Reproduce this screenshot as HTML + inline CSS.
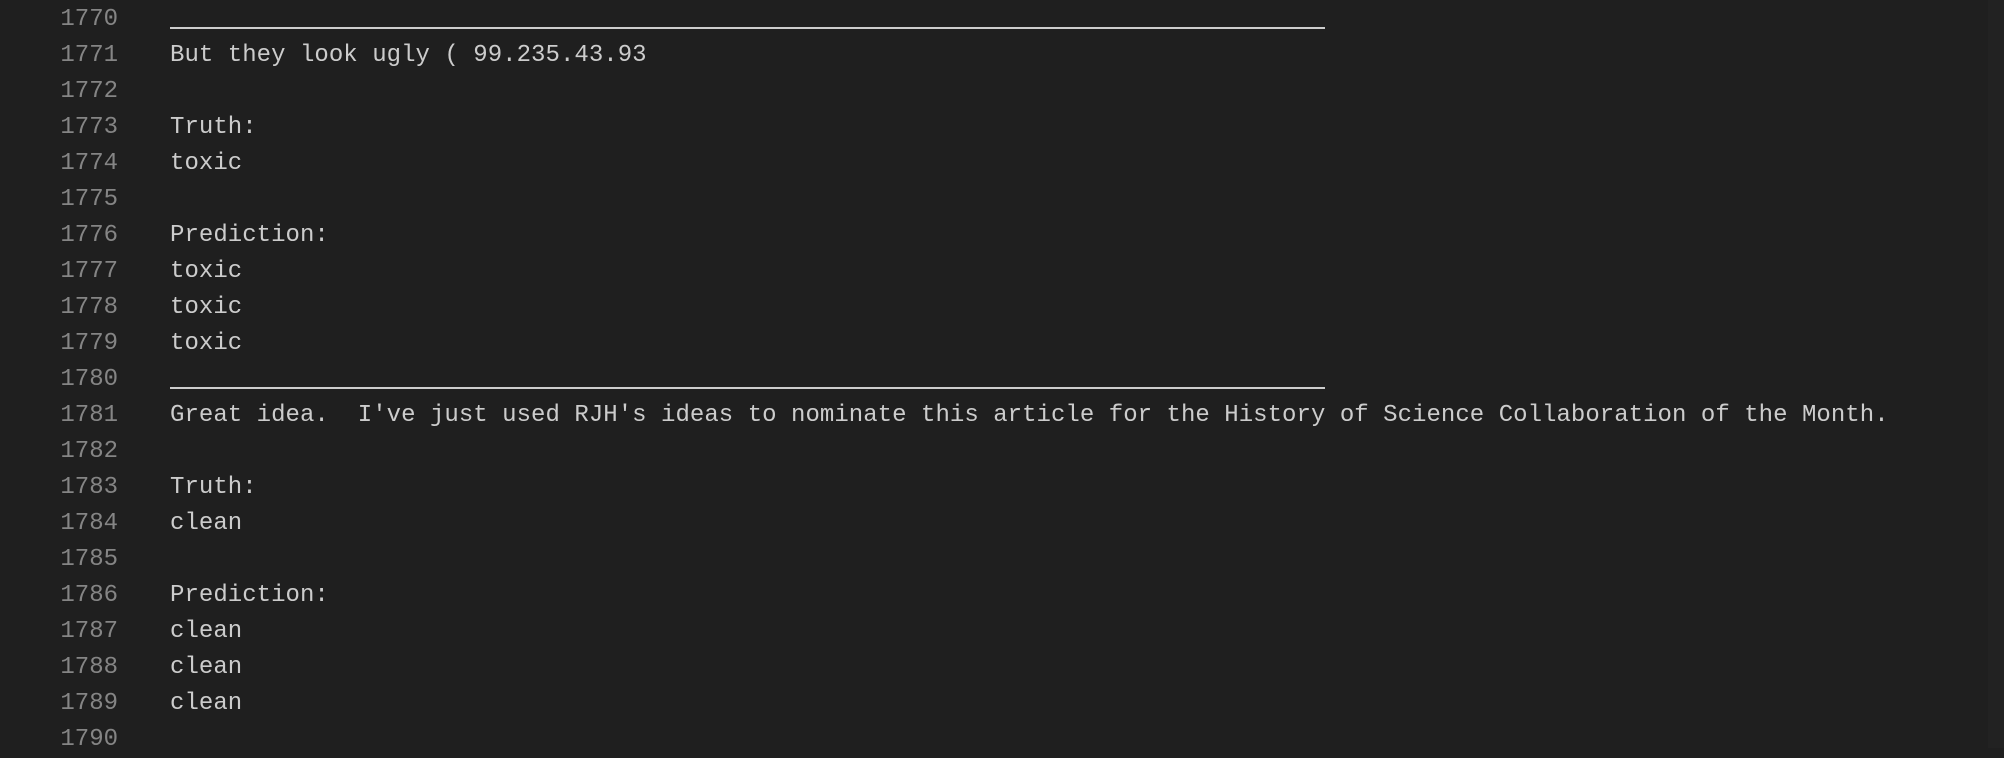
<!DOCTYPE html>
<html><head><meta charset="utf-8"><style>
html,body{margin:0;padding:0;background:#1f1f1f;width:2004px;height:748px;overflow:hidden}
.ed{position:absolute;left:0;top:2px;font-family:"Liberation Mono",monospace;font-size:24px;line-height:36px;}
.l{height:36px;position:relative;white-space:pre}
.n{position:absolute;right:calc(2004px - 118px);color:#858585}
.t{position:absolute;left:170px;color:#cccccc;letter-spacing:0.04px}
.sep{position:absolute;left:170px;width:1155px;height:2px;background:#cccccc;top:25px}
.sb{position:absolute;right:0;top:0;width:16px;height:748px;background:#222222}
</style></head><body>
<div class="ed" style="width:2004px">
<div class="l"><span class="n">1770</span><div class="sep"></div></div>
<div class="l"><span class="n">1771</span><span class="t">But they look ugly ( 99.235.43.93</span></div>
<div class="l"><span class="n">1772</span></div>
<div class="l"><span class="n">1773</span><span class="t">Truth:</span></div>
<div class="l"><span class="n">1774</span><span class="t">toxic</span></div>
<div class="l"><span class="n">1775</span></div>
<div class="l"><span class="n">1776</span><span class="t">Prediction:</span></div>
<div class="l"><span class="n">1777</span><span class="t">toxic</span></div>
<div class="l"><span class="n">1778</span><span class="t">toxic</span></div>
<div class="l"><span class="n">1779</span><span class="t">toxic</span></div>
<div class="l"><span class="n">1780</span><div class="sep"></div></div>
<div class="l"><span class="n">1781</span><span class="t">Great idea.  I've just used RJH's ideas to nominate this article for the History of Science Collaboration of the Month.</span></div>
<div class="l"><span class="n">1782</span></div>
<div class="l"><span class="n">1783</span><span class="t">Truth:</span></div>
<div class="l"><span class="n">1784</span><span class="t">clean</span></div>
<div class="l"><span class="n">1785</span></div>
<div class="l"><span class="n">1786</span><span class="t">Prediction:</span></div>
<div class="l"><span class="n">1787</span><span class="t">clean</span></div>
<div class="l"><span class="n">1788</span><span class="t">clean</span></div>
<div class="l"><span class="n">1789</span><span class="t">clean</span></div>
<div class="l"><span class="n">1790</span></div>
</div>
<div class="sb"></div>
</body></html>
